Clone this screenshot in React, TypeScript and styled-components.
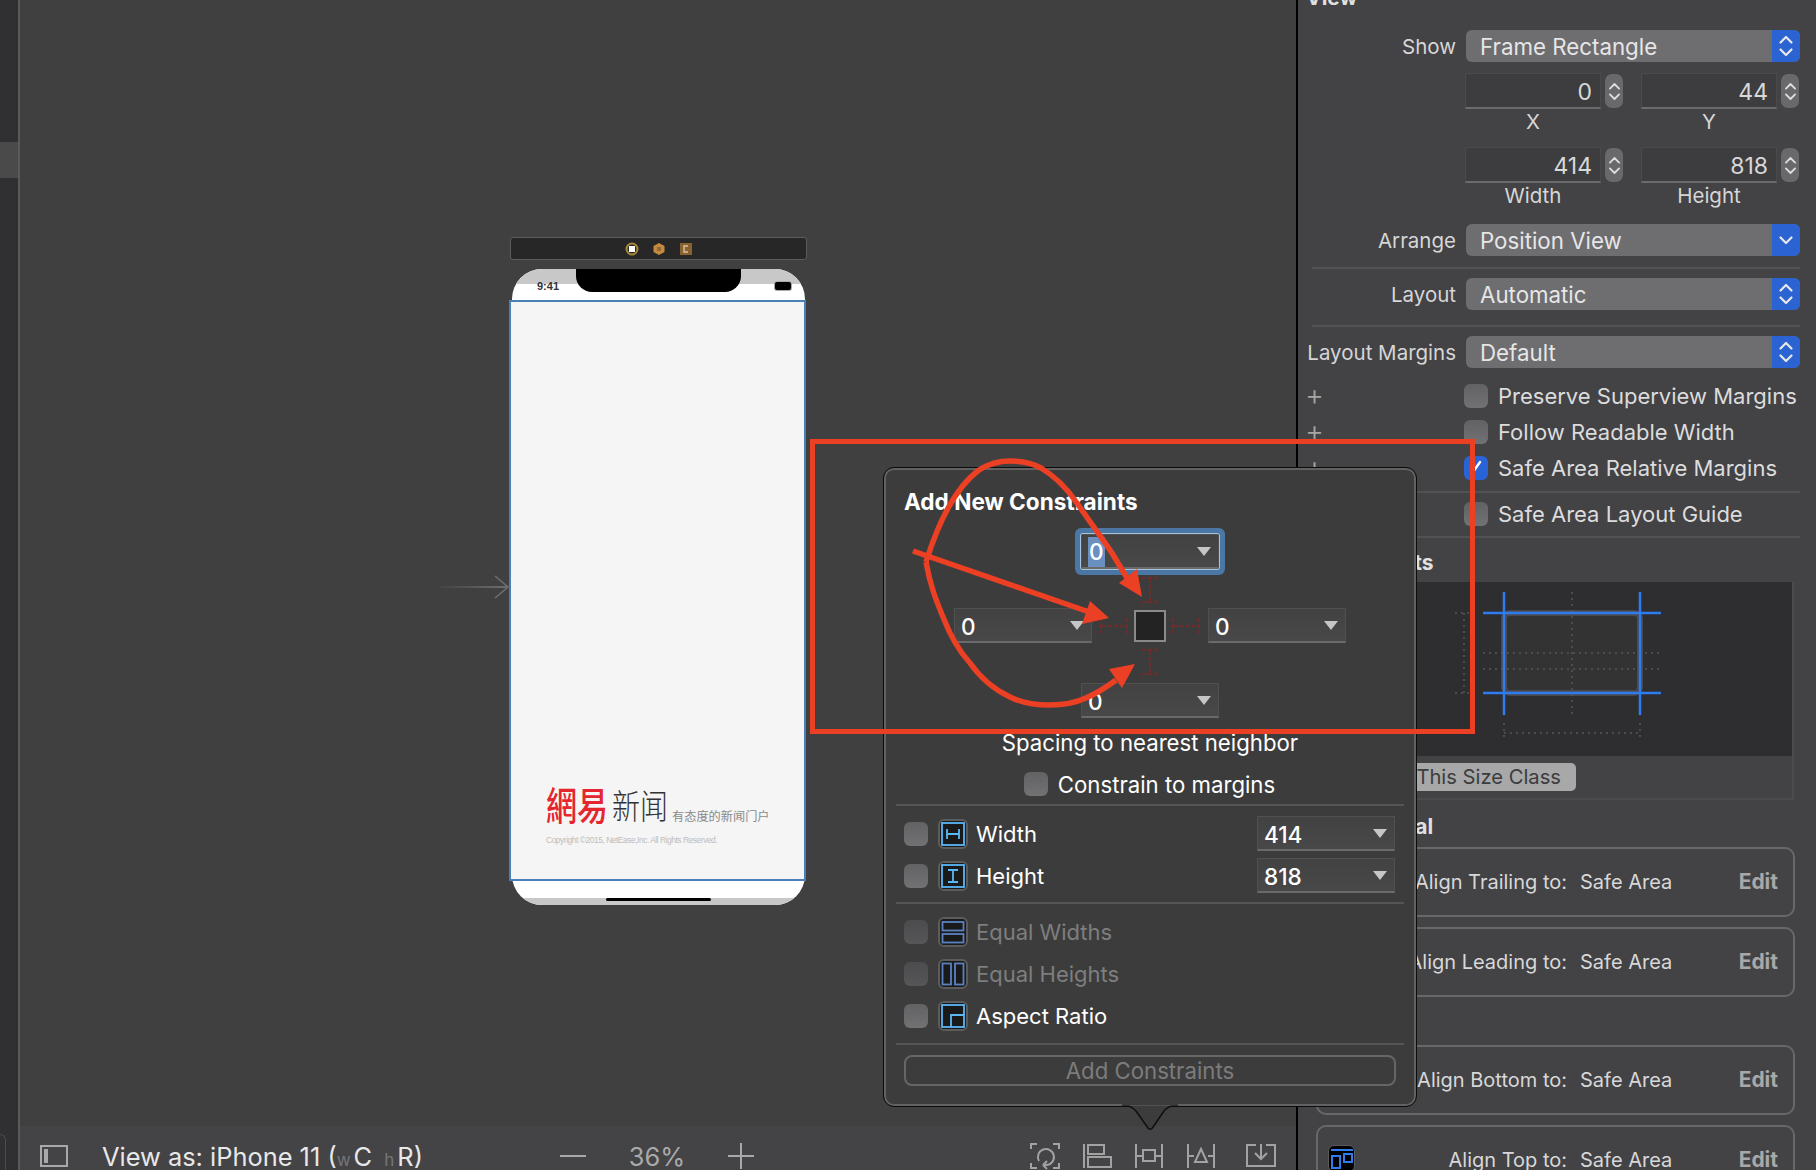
import type { ReactNode } from "react";
import styled, { createGlobalStyle } from "styled-components";

const GlobalStyle = createGlobalStyle`
    html, body {
        margin: 0;
        padding: 0;
        background: #404040;
    }
    * {
        box-sizing: border-box;
    }
    body {
        font-family: Inter, "Liberation Sans", sans-serif;
    }
`;

const Root = styled.div`
    position: relative;
    width: 1816px;
    height: 1170px;
    display: flex;
    overflow: hidden;
    font-size: 20.5px;
    color: #e2e2e2;
`;

/* ---- left gutter ---- */
const Gutter = styled.div`
    width: 20px;
    flex: none;
    position: relative;
    background: #302f31;
    border-right: 2px solid #5a5a5a;
    padding-top: 142px;
`;

const GutterTab = styled.div`
    height: 36px;
    background: #4a4a4a;
`;

const GutterNotch = styled.div`
    position: absolute;
    left: -10px;
    bottom: 0;
    width: 16px;
    height: 36px;
    border: 1px solid #4c4c4e;
    border-bottom: none;
    border-radius: 0 6px 0 0;
`;

/* ---- canvas ---- */
const Canvas = styled.div`
    flex: 1;
    position: relative;
    background: #404040;
    display: flex;
    flex-direction: column;
    justify-content: flex-end;
`;

const SceneBar = styled.div`
    position: absolute;
    left: 490px;
    top: 237px;
    width: 297px;
    height: 23px;
    background: #272727;
    border: 1px solid #5c5c5c;
    border-radius: 3px;
    display: flex;
    align-items: center;
    justify-content: center;
    gap: 13px;
`;

const EntryArrow = styled.svg`
    position: absolute;
    left: 420px;
    top: 570px;
`;

const DeviceFrame = styled.div`
    position: absolute;
    left: 492px;
    top: 269px;
    width: 293px;
    height: 636px;
`;

const DeviceBody = styled.div`
    position: relative;
    width: 100%;
    height: 100%;
    border-radius: 30px;
    background: #fff;
    overflow: hidden;
`;

const StatusStrip = styled.div`
    height: 15px;
    background: #c8c8c8;
`;

const Notch = styled.div`
    position: absolute;
    left: 64px;
    top: 0;
    width: 165px;
    height: 23px;
    background: #000;
    border-radius: 0 0 16px 16px;
`;

const Clock = styled.span`
    position: absolute;
    left: 25px;
    top: 10px;
    font-size: 11px;
    line-height: 14px;
    font-weight: 700;
    font-family: "Liberation Sans", sans-serif;
    color: #333;
`;

const Battery = styled.div`
    position: absolute;
    right: 14px;
    top: 13px;
    width: 16px;
    height: 8px;
    border-radius: 2px;
    background: #000;
    box-shadow: 0 0 0 1px #aaa;
`;

const HomeStrip = styled.div`
    position: absolute;
    left: 0;
    right: 0;
    bottom: 0;
    height: 7px;
    background: #c8c8c8;
`;

const HomeBar = styled.div`
    position: absolute;
    left: 94px;
    bottom: 4px;
    width: 105px;
    height: 3px;
    background: #000;
    border-radius: 2px;
`;

const Screen = styled.div`
    position: absolute;
    left: -3px;
    top: 31px;
    width: 297px;
    height: 581px;
    background: #f5f5f5;
    border: 2px solid #4a7fb8;
    padding: 484px 0 0 35px;
`;

const LogoRow = styled.div`
    display: flex;
    align-items: flex-end;
    height: 42px;
    white-space: nowrap;
    font-family: "Noto Sans CJK TC", "Noto Sans CJK SC", sans-serif;
`;

const LogoRed = styled.span`
    display: inline-block;
    font-size: 31px;
    line-height: 40px;
    font-weight: 500;
    color: #e5262f;
    margin-right: 4px;
    transform: scaleY(1.25);
    transform-origin: 50% 90%;
`;

const LogoDark = styled.span`
    display: inline-block;
    font-family: "Noto Sans CJK SC", sans-serif;
    font-size: 28px;
    line-height: 40px;
    font-weight: 300;
    color: #333;
    margin-right: 4px;
    transform: scaleY(1.2);
    transform-origin: 50% 90%;
`;

const LogoSlogan = styled.span`
    font-family: "Noto Sans CJK SC", sans-serif;
    font-size: 12.2px;
    line-height: 24px;
    color: #8a8a8a;
`;

const Copyright = styled.div`
    margin-top: 6px;
    font-family: "Liberation Sans", sans-serif;
    font-size: 8.5px;
    line-height: 12px;
    letter-spacing: -0.5px;
    color: #bdbdbd;
    white-space: nowrap;
`;

const BottomBar = styled.div`
    height: 44px;
    background: #444345;
    display: flex;
    align-items: center;
    padding: 16px 0 0 20px;
    position: relative;
`;

const ViewAs = styled.span`
    margin-left: 34px;
    width: 320px;
    font-size: 25.4px;
    color: #e8e8e8;
    white-space: nowrap;
`;

const SizeHint = styled.span<{ $gap?: number }>`
    font-size: 17px;
    color: #77767a;
    margin: 0 3px 0 ${(p) => p.$gap ?? 0}px;
`;

const ZoomGroup = styled.div`
    margin-left: 138px;
    width: 194px;
    display: flex;
    align-items: center;
    justify-content: space-between;
`;

const ZoomValue = styled.span`
    font-size: 25.4px;
    color: #a9a9a9;
`;

const BarIcons = styled.div`
    margin-left: 276px;
    display: flex;
    align-items: center;
    gap: 22px;
`;

const BarIconLast = styled.div`
    display: flex;
    margin-left: 8px;
`;

/* ---- inspector ---- */
const Inspector = styled.div`
    width: 520px;
    flex: none;
    background: #434245;
    border-left: 2px solid #000;
    padding: 0 16px 0 14px;
    overflow: hidden;
`;

const SectionTitle = styled.div<{ $mt: number; $ml: number }>`
    height: 22px;
    line-height: 22px;
    margin-top: ${(p) => p.$mt}px;
    margin-left: ${(p) => p.$ml}px;
    font-weight: 700;
    font-size: 21px;
    color: #e0e0e0;
`;

const Row = styled.div<{ $mt: number }>`
    display: grid;
    grid-template-columns: 144px 1fr;
    column-gap: 9px;
    align-items: center;
    margin-top: ${(p) => p.$mt}px;
`;

const RowLabel = styled.div`
    justify-self: end;
    white-space: nowrap;
    color: #d6d6d6;
`;

const Plus = styled.div`
    font-size: 29px;
    line-height: 24px;
    font-weight: 300;
    color: #a5a5a5;
    margin: -3px 0 0 -7px;
`;

const Select = styled.div`
    height: 32px;
    border-radius: 6px;
    background: #6e6d70;
    display: flex;
    align-items: center;
    justify-content: space-between;
    padding-left: 14px;
    overflow: hidden;
    color: #e6e6e6;
    font-size: 22.3px;
    margin-left: 1px;
`;

const SelectCap = styled.div`
    width: 28px;
    height: 100%;
    background: #2b63d3;
    display: flex;
    align-items: center;
    justify-content: center;
`;

const FieldsGrid = styled.div`
    display: grid;
    grid-template-columns: 1fr 1fr;
    column-gap: 17px;
`;

const FieldWrap = styled.div`
    display: grid;
    grid-template-columns: 136px 18px;
    column-gap: 4px;
    align-items: center;
`;

const NumField = styled.div`
    height: 36px;
    line-height: 37px;
    background: #3d3d3f;
    border: 1px solid #4a4a4c;
    border-bottom: 2px solid #6a6a6c;
    text-align: right;
    padding-right: 8px;
    font-size: 23px;
    color: #d8d8d8;
`;

const Stepper = styled.div`
    height: 34px;
    border-radius: 7px;
    background: #69686b;
    display: flex;
    align-items: center;
    justify-content: center;
`;

const FieldCaption = styled.div`
    height: 24px;
    line-height: 24px;
    width: 136px;
    text-align: center;
    margin-top: 1px;
    color: #d6d6d6;
`;

const Divider = styled.div<{ $mt: number }>`
    height: 2px;
    margin-top: ${(p) => p.$mt}px;
    background: #525154;
`;

const Check = styled.div<{ $checked?: boolean; $dim?: boolean }>`
    width: 24px;
    height: 24px;
    flex: none;
    border-radius: 6px;
    background: ${(p) =>
        p.$checked
            ? "#2a63d6"
            : p.$dim
              ? "linear-gradient(#4c4c4e, #565658)"
              : "linear-gradient(#626264, #727274)"};
    display: flex;
    align-items: center;
    justify-content: center;
`;

const CheckRowInner = styled.div`
    display: flex;
    align-items: center;
    gap: 10px;
    height: 24px;
    margin-left: -1px;
    white-space: nowrap;
    color: #dcdcdc;
    font-size: 22px;
`;

const SizeClassPanel = styled.div`
    margin: 8px 6px 0 0;
    border: 2px solid #4c4b4e;
    border-top: none;
`;

const DiagramBox = styled.div`
    height: 174px;
    background: #2e2d30;
    display: flex;
    align-items: flex-start;
    padding-left: 141px;
`;

const SizeClassFooter = styled.div`
    height: 42px;
    display: flex;
    align-items: center;
    justify-content: flex-end;
    padding: 0 216px 0 0;
`;

const SizeClassButton = styled.div`
    width: 220px;
    height: 28px;
    line-height: 28px;
    border-radius: 5px;
    background: #a8a8a9;
    color: #3c3c3e;
    font-size: 20.2px;
    text-align: right;
    padding-right: 15px;
    white-space: nowrap;
`;

const CardList = styled.div`
    margin: 9px 5px 0 4px;
    display: flex;
    flex-direction: column;
`;

const Card = styled.div<{ $mt: number }>`
    position: relative;
    height: 70px;
    flex: none;
    margin-top: ${(p) => p.$mt}px;
    border: 2px solid #68676a;
    border-radius: 10px;
    display: flex;
    align-items: center;
    padding-right: 15px;
    font-size: 20px;
    color: #d8d8d8;
`;

const CardLabel = styled.span`
    width: 249px;
    text-align: right;
    white-space: nowrap;
`;

const CardValue = styled.span`
    margin-left: 13px;
    white-space: nowrap;
`;

const CardEdit = styled.span`
    margin: -2px 0 0 auto;
    font-size: 21px;
    font-weight: 700;
    color: #a8a8a8;
`;

const CardIcon = styled.div`
    position: absolute;
    left: 10px;
    top: 18px;
    width: 27px;
    height: 27px;
    border-radius: 6px;
    background: #000;
    border: 1px solid #5a5a5c;
    display: flex;
    align-items: center;
    justify-content: center;
`;

/* ---- popover ---- */
const Popover = styled.div`
    position: absolute;
    left: 884px;
    top: 468px;
    width: 532px;
    height: 638px;
    background: #3c3c3c;
    border: 2px solid #626262;
    outline: 1px solid #0c0c0c;
    border-radius: 10px;
    padding: 18px 10px 0;
    display: flex;
    flex-direction: column;
`;

const PopoverTip = styled.svg`
    position: absolute;
    left: 1122px;
    top: 1103px;
`;

const PopoverTitle = styled.div`
    height: 28px;
    line-height: 28px;
    padding-left: 8px;
    font-weight: 700;
    font-size: 22.6px;
    color: #fff;
`;

const PinRow = styled.div<{ $mt: number }>`
    display: flex;
    justify-content: center;
    align-items: center;
    margin-top: ${(p) => p.$mt}px;
`;

const DropField = styled.div<{ $focused?: boolean }>`
    width: 138px;
    height: 35px;
    background: linear-gradient(#424242, #484848);
    border: 1px solid #505050;
    border-bottom: 2px solid #6a6a6a;
    border-radius: ${(p) => (p.$focused ? "2px" : "0")};
    box-shadow: ${(p) =>
        p.$focused ? "0 0 0 1px #a9c4de, 0 0 0 6px #4a77a4" : "none"};
    display: flex;
    align-items: center;
    justify-content: space-between;
    padding: 2px 7px 0 6px;
    font-size: 22.6px;
    font-weight: 500;
    color: #fff;
`;

const Selected = styled.span`
    background: #6a90c2;
    padding: 0 1px;
    line-height: 30px;
`;

const Caret = styled.i`
    width: 0;
    height: 0;
    margin-top: -2px;
    border-left: 7px solid transparent;
    border-right: 7px solid transparent;
    border-top: 9px solid #c6c6c6;
`;

const CenterSquare = styled.div`
    width: 32px;
    height: 32px;
    background: #232323;
    border: 2px solid #8a8a8a;
    margin: 0 6px;
`;

const Beam = styled.svg`
    display: block;
`;

const BeamGap = styled.div`
    width: 8px;
`;

const Caption = styled.div`
    margin-top: 12px;
    height: 26px;
    line-height: 26px;
    text-align: center;
    font-size: 22.2px;
    color: #fff;
    white-space: nowrap;
`;

const ConstrainRow = styled.div`
    margin-top: 16px;
    display: flex;
    align-items: center;
    justify-content: center;
    gap: 10px;
    height: 24px;
    font-size: 22.2px;
    color: #fff;
    padding-right: 1px;
`;

const PopDivider = styled.div<{ $mt: number }>`
    height: 2px;
    margin-top: ${(p) => p.$mt}px;
    background: #555;
`;

const SizeRow = styled.div<{ $mt: number; $h: number; $dim?: boolean }>`
    display: flex;
    align-items: center;
    height: ${(p) => p.$h}px;
    margin-top: ${(p) => p.$mt}px;
    padding: 0 9px 0 8px;
    font-size: 22px;
    color: ${(p) => (p.$dim ? "#7e7e7e" : "#fff")};
`;

const ConstraintTile = styled.div`
    width: 30px;
    height: 30px;
    margin: 0 8px 0 10px;
    flex: none;
    border-radius: 6px;
    background: #1a1a1a;
    border: 2px solid #5c5c5c;
    display: flex;
    align-items: center;
    justify-content: center;
`;

const AddButton = styled.div`
    margin: 10px 8px 0;
    height: 31px;
    line-height: 28px;
    border: 2px solid #666;
    border-radius: 8px;
    text-align: center;
    color: #7c7c7c;
    font-size: 22.2px;
`;

const Spacer = styled.div`
    flex: 1;
`;

/* ---- red annotation ---- */
const RedFrame = styled.div`
    position: absolute;
    left: 810px;
    top: 439px;
    width: 665px;
    height: 295px;
    border: 5px solid #ec4024;
`;

const Annotation = styled.svg`
    position: absolute;
    left: 900px;
    top: 450px;
`;

const Chevrons = ({ color = "#e8e8e8", size = 18 }: { color?: string; size?: number }) => (
    <svg width={size} height={size + 10} viewBox="0 0 18 28" fill="none" stroke={color} strokeWidth="2.2" strokeLinecap="round" strokeLinejoin="round">
        <path d="M3.5 10.5 9 5l5.500 5.500" />
        <path d="M3.5 17.5 9 23l5.500-5.500" />
    </svg>
);

const SelectControl = ({ text, single }: { text: string; single?: boolean }) => (
    <Select>
        {text}
        <SelectCap>
            {single ? (
                <svg width="18" height="14" viewBox="0 0 18 14" fill="none" stroke="#e8e8e8" strokeWidth="2.2" strokeLinecap="round" strokeLinejoin="round">
                    <path d="M3.5 4.5 9 10l5.500-5.500" />
                </svg>
            ) : (
                <Chevrons />
            )}
        </SelectCap>
    </Select>
);

const Field = ({ value }: { value: string }) => (
    <FieldWrap>
        <NumField>{value}</NumField>
        <Stepper>
            <Chevrons size={15} color="#dcdcdc" />
        </Stepper>
    </FieldWrap>
);

const CheckRow = ({ text, plus, checked, mt }: { text: string; plus?: boolean; checked?: boolean; mt: number }) => (
    <Row $mt={mt}>
        {plus ? <Plus>+</Plus> : <span />}
        <CheckRowInner>
            <Check $checked={checked}>
                {checked && (
                    <svg width="18" height="18" viewBox="0 0 18 18" fill="none" stroke="#fff" strokeWidth="2.4" strokeLinecap="round">
                        <path d="M4 10l2 3L13 3" />
                    </svg>
                )}
            </Check>
            {text}
        </CheckRowInner>
    </Row>
);

const IBeamV = () => (
    <Beam width="18" height="26" viewBox="0 0 18 26" fill="none" stroke="#6e2c2c" strokeWidth="2" strokeDasharray="4 2">
        <path d="M1 1h16M1 25h16M9 2v22" />
    </Beam>
);

const IBeamH = () => (
    <Beam width="28" height="18" viewBox="0 0 28 18" fill="none" stroke="#6e2c2c" strokeWidth="2" strokeDasharray="4 2">
        <path d="M1 1v16M27 1v16M2 9h24" />
    </Beam>
);

const TileIcon = ({ kind, color }: { kind: string; color: string }) => (
    <svg width="24" height="24" viewBox="0 0 24 24" fill="none" stroke={color} strokeWidth="1.8">
        {kind === "width" && (
            <>
                <rect x="1" y="1" width="22" height="22" />
                <path d="M6 7v10M18 7v10M6 12h12" />
            </>
        )}
        {kind === "height" && (
            <>
                <rect x="1" y="1" width="22" height="22" />
                <path d="M7 6h10M7 18h10M12 6v12" />
            </>
        )}
        {kind === "eqw" && (
            <>
                <rect x="1.5" y="2" width="21" height="8.5" />
                <rect x="1.5" y="14" width="21" height="8.5" />
            </>
        )}
        {kind === "eqh" && (
            <>
                <rect x="1.5" y="1.5" width="8.5" height="21" />
                <rect x="14" y="1.5" width="8.5" height="21" />
            </>
        )}
        {kind === "aspect" && (
            <>
                <rect x="1" y="1" width="22" height="22" />
                <path d="M10 23V11h13" />
            </>
        )}
    </svg>
);

const BarGlyph = ({ children, w = 30 }: { children: ReactNode; w?: number }) => (
    <svg width={w} height="28" viewBox={`0 0 ${w} 28`} fill="none" stroke="#a2a2a2" strokeWidth="2">
        {children}
    </svg>
);

const SizeClassDiagram = () => (
    <svg width="240" height="174" viewBox="0 0 240 174" fill="none">
        <rect x="49" y="31" width="136" height="80" rx="6" fill="#333" stroke="#4a4a4c" strokeWidth="6" />
        <g stroke="#57575a" strokeWidth="1.5" strokeDasharray="2 4">
            <path d="M9 31v80M0 31h14M0 111h14" />
            <path d="M49 151h136M49 141v17M185 141v17" />
            <path d="M117 10v123M28 71h178M28 87h178" />
        </g>
        <g stroke="#2f7bf0" strokeWidth="2.5">
            <path d="M49 10v123M185 10v123M28 31h178M28 111h178" />
        </g>
    </svg>
);

function App() {
    return (
        <Root>
            <GlobalStyle />
            <Gutter>
                <GutterTab />
                <GutterNotch />
            </Gutter>

            <Canvas>
                <SceneBar>
                    <svg width="14" height="14" viewBox="0 0 14 14">
                        <circle cx="7" cy="7" r="5.5" fill="#2a2a2a" stroke="#a98a3a" strokeWidth="2" />
                        <rect x="4" y="4" width="6" height="6" fill="#fff" />
                    </svg>
                    <svg width="14" height="14" viewBox="0 0 14 14">
                        <path d="M7 1l5.500 3v6L7 13l-5.500-3V4z" fill="#c58a3e" />
                        <path d="M5 5h4v4H5z" fill="#8f6a38" />
                    </svg>
                    <svg width="14" height="14" viewBox="0 0 14 14">
                        <rect x="1" y="1" width="12" height="12" fill="#8a6230" />
                        <path d="M9 4H5v6h4" fill="none" stroke="#d8c4a0" strokeWidth="1.4" />
                    </svg>
                </SceneBar>

                <EntryArrow width="70" height="34" viewBox="0 0 70 34" fill="none">
                    <defs>
                        <linearGradient id="entryFade" x1="0" x2="1" y1="0" y2="0">
                            <stop offset="0" stopColor="#6a6a6a" stopOpacity="0.1" />
                            <stop offset="1" stopColor="#6e6e6e" />
                        </linearGradient>
                    </defs>
                    <rect x="0" y="16" width="67" height="2" fill="url(#entryFade)" />
                    <path d="M55 6l13 11-13 11" stroke="#6e6e6e" strokeWidth="1.6" />
                </EntryArrow>

                <DeviceFrame>
                    <DeviceBody>
                        <StatusStrip />
                        <Notch />
                        <Clock>9:41</Clock>
                        <Battery />
                        <HomeStrip />
                        <HomeBar />
                    </DeviceBody>
                    <Screen>
                        <LogoRow>
                            <LogoRed>網易</LogoRed>
                            <LogoDark>新闻</LogoDark>
                            <LogoSlogan>有态度的新闻门户</LogoSlogan>
                        </LogoRow>
                        <Copyright>Copyright ©2015, NetEase,Inc. All Rights Reserved.</Copyright>
                    </Screen>
                </DeviceFrame>

                <BottomBar>
                    <svg width="28" height="22" viewBox="0 0 28 22" fill="none">
                        <rect x="1" y="1" width="26" height="20" stroke="#a9a9a9" strokeWidth="2" />
                        <rect x="4" y="4" width="4" height="14" fill="#a9a9a9" />
                    </svg>
                    <ViewAs>
                        View as: iPhone 11 (<SizeHint>w</SizeHint>C <SizeHint $gap={5}>h</SizeHint>R)
                    </ViewAs>
                    <ZoomGroup>
                        <svg width="26" height="4" viewBox="0 0 26 4">
                            <rect width="26" height="2" y="1" fill="#a9a9a9" />
                        </svg>
                        <ZoomValue>36%</ZoomValue>
                        <svg width="26" height="26" viewBox="0 0 26 26">
                            <path d="M0 13h26M13 0v26" stroke="#a9a9a9" strokeWidth="2" />
                        </svg>
                    </ZoomGroup>
                    <BarIcons>
                        <BarGlyph>
                            <path d="M1 7V2h6M23 2h6v5M1 21v5h6M23 26h6v-5" />
                            <path d="M9 19a8 8 0 1 1 7 4h-3m0 0 4-4m-4 4 4 4" />
                        </BarGlyph>
                        <BarGlyph>
                            <path d="M2 2v24M6 3h16v9H6zM6 15h23v10H6z" />
                        </BarGlyph>
                        <BarGlyph>
                            <path d="M2 2v24M28 2v24M2 14h7M21 14h7M9 8h12v11H9z" />
                        </BarGlyph>
                        <BarGlyph>
                            <path d="M2 2v24M28 2v24M2 14h6M22 14h6M15 7l6 13H9z" />
                        </BarGlyph>
                        <BarIconLast>
                            <BarGlyph>
                                <path d="M10 3H1v21h28V3h-9M15 2v15m-6-6 6 6 6-6" />
                            </BarGlyph>
                        </BarIconLast>
                    </BarIcons>
                </BottomBar>
            </Canvas>

            <Inspector>
                <SectionTitle $mt={-13} $ml={-6}>View</SectionTitle>
                <Row $mt={21}>
                    <RowLabel>Show</RowLabel>
                    <SelectControl text="Frame Rectangle" />
                </Row>
                <Row $mt={11}>
                    <span />
                    <FieldsGrid>
                        <div>
                            <Field value="0" />
                            <FieldCaption>X</FieldCaption>
                        </div>
                        <div>
                            <Field value="44" />
                            <FieldCaption>Y</FieldCaption>
                        </div>
                    </FieldsGrid>
                </Row>
                <Row $mt={13}>
                    <span />
                    <FieldsGrid>
                        <div>
                            <Field value="414" />
                            <FieldCaption>Width</FieldCaption>
                        </div>
                        <div>
                            <Field value="818" />
                            <FieldCaption>Height</FieldCaption>
                        </div>
                    </FieldsGrid>
                </Row>
                <Row $mt={16}>
                    <RowLabel>Arrange</RowLabel>
                    <SelectControl text="Position View" single />
                </Row>
                <Divider $mt={11} />
                <Row $mt={9}>
                    <RowLabel>Layout</RowLabel>
                    <SelectControl text="Automatic" />
                </Row>
                <Divider $mt={15} />
                <Row $mt={9}>
                    <RowLabel>Layout Margins</RowLabel>
                    <SelectControl text="Default" />
                </Row>
                <CheckRow mt={16} plus text="Preserve Superview Margins" />
                <CheckRow mt={12} plus text="Follow Readable Width" />
                <CheckRow mt={12} plus checked text="Safe Area Relative Margins" />
                <Divider $mt={11} />
                <CheckRow mt={9} text="Safe Area Layout Guide" />
                <Divider $mt={10} />
                <SectionTitle $mt={14} $ml={2}>Constraints</SectionTitle>
                <SizeClassPanel>
                    <DiagramBox>
                        <SizeClassDiagram />
                    </DiagramBox>
                    <SizeClassFooter>
                        <SizeClassButton>This Size Class</SizeClassButton>
                    </SizeClassFooter>
                </SizeClassPanel>
                <SectionTitle $mt={16} $ml={15}>Horizontal</SectionTitle>
                <CardList>
                    <Card $mt={0}>
                        <CardLabel>Align Trailing to:</CardLabel>
                        <CardValue>Safe Area</CardValue>
                        <CardEdit>Edit</CardEdit>
                    </Card>
                    <Card $mt={10}>
                        <CardLabel>Align Leading to:</CardLabel>
                        <CardValue>Safe Area</CardValue>
                        <CardEdit>Edit</CardEdit>
                    </Card>
                    <Card $mt={48}>
                        <CardLabel>Align Bottom to:</CardLabel>
                        <CardValue>Safe Area</CardValue>
                        <CardEdit>Edit</CardEdit>
                    </Card>
                    <Card $mt={10}>
                        <CardIcon>
                            <svg width="24" height="24" viewBox="0 0 24 24" fill="none" stroke="#2f7bf0" strokeWidth="2">
                                <path d="M1 3h22" />
                                <rect x="2" y="9" width="8" height="12" />
                                <rect x="14" y="7" width="8" height="8" />
                            </svg>
                        </CardIcon>
                        <CardLabel>Align Top to:</CardLabel>
                        <CardValue>Safe Area</CardValue>
                        <CardEdit>Edit</CardEdit>
                    </Card>
                </CardList>
            </Inspector>

            <Popover>
                <PopoverTitle>Add New Constraints</PopoverTitle>
                <PinRow $mt={18}>
                    <DropField $focused>
                        <Selected>0</Selected>
                        <Caret />
                    </DropField>
                </PinRow>
                <PinRow $mt={8}>
                    <IBeamV />
                </PinRow>
                <PinRow $mt={5}>
                    <DropField>
                        0
                        <Caret />
                    </DropField>
                    <BeamGap />
                    <IBeamH />
                    <CenterSquare />
                    <IBeamH />
                    <BeamGap />
                    <DropField>
                        0
                        <Caret />
                    </DropField>
                </PinRow>
                <PinRow $mt={6}>
                    <IBeamV />
                </PinRow>
                <PinRow $mt={8}>
                    <DropField>
                        0
                        <Caret />
                    </DropField>
                </PinRow>
                <Caption>Spacing to nearest neighbor</Caption>
                <ConstrainRow>
                    <Check />
                    Constrain to margins
                </ConstrainRow>
                <PopDivider $mt={8} />
                <SizeRow $mt={10} $h={35}>
                    <Check />
                    <ConstraintTile>
                        <TileIcon kind="width" color="#5ab8f8" />
                    </ConstraintTile>
                    Width
                    <Spacer />
                    <DropField>
                        414
                        <Caret />
                    </DropField>
                </SizeRow>
                <SizeRow $mt={7} $h={35}>
                    <Check />
                    <ConstraintTile>
                        <TileIcon kind="height" color="#5ab8f8" />
                    </ConstraintTile>
                    Height
                    <Spacer />
                    <DropField>
                        818
                        <Caret />
                    </DropField>
                </SizeRow>
                <PopDivider $mt={9} />
                <SizeRow $mt={13} $h={30} $dim>
                    <Check $dim />
                    <ConstraintTile>
                        <TileIcon kind="eqw" color="#5a82c0" />
                    </ConstraintTile>
                    Equal Widths
                </SizeRow>
                <SizeRow $mt={12} $h={30} $dim>
                    <Check $dim />
                    <ConstraintTile>
                        <TileIcon kind="eqh" color="#5a82c0" />
                    </ConstraintTile>
                    Equal Heights
                </SizeRow>
                <SizeRow $mt={12} $h={30}>
                    <Check />
                    <ConstraintTile>
                        <TileIcon kind="aspect" color="#5ab8f8" />
                    </ConstraintTile>
                    Aspect Ratio
                </SizeRow>
                <PopDivider $mt={12} />
                <AddButton>Add Constraints</AddButton>
            </Popover>
            <PopoverTip width="56" height="30" viewBox="0 0 56 30">
                <path d="M0 3h4c5 0 7 2 10 5l12 17c1.400 1.600 3 1.600 4.400 0L42 8c3-3 5-5 10-5h4" fill="#3c3c3c" stroke="#0e0e0e" strokeWidth="1.5" />
                <rect x="0" y="0" width="56" height="2.400" fill="#3c3c3c" />
            </PopoverTip>

            <RedFrame />
            <Annotation width="260" height="270" viewBox="900 450 260 270" fill="none">
                <g stroke="#ec4024" strokeWidth="5.500" strokeLinecap="butt" strokeLinejoin="round">
                    <path d="M913 551 1092 613" />
                    <path d="M926 562C936 530 952 490 979 470C990 463 1000 461 1010 461C1022 461 1032 463 1041 468C1058 478 1068 490 1077 503C1092 525 1102 538 1112 553L1130 583" />
                    <path d="M926 562C930 585 936 600 943 617C950 635 958 650 970 663C982 680 995 690 1010 697C1022 703 1036 705 1050 705C1064 705 1075 703 1086 698C1095 694 1104 689 1116 680" />
                </g>
                <g fill="#ec4024">
                    <path d="M1109 618 1090 601 1082 624z" />
                    <path d="M1142 597 1119 583 1137 569z" />
                    <path d="M1135 664 1109 669 1122 688z" />
                </g>
            </Annotation>
        </Root>
    );
}

export default App;
